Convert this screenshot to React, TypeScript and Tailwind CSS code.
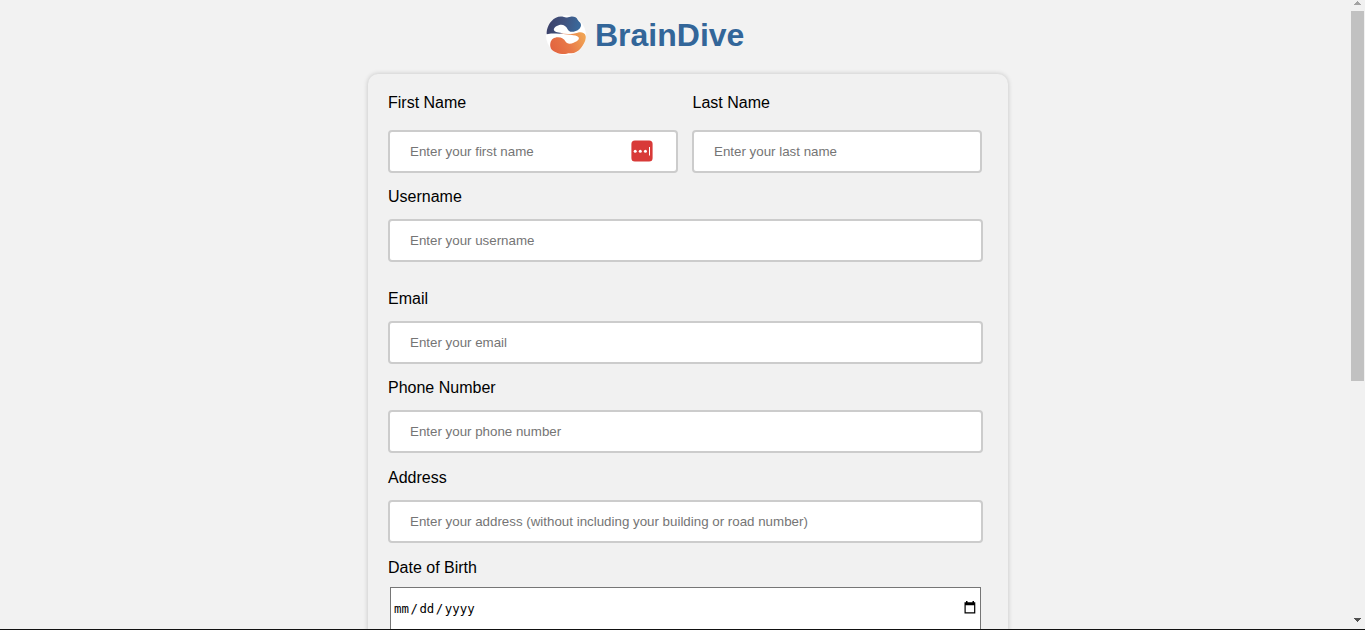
import React from 'react';

function Logo() {
  return (
    <svg className="h-[42px] w-[43px] shrink-0" viewBox="30 27 129 126" aria-hidden="true">
      <defs>
        <linearGradient id="navy" x1="0" y1="0.4" x2="1" y2="0.5">
          <stop offset="0" stopColor="#3b4068" />
          <stop offset="0.5" stopColor="#41537f" />
          <stop offset="1" stopColor="#386b9e" />
        </linearGradient>
        <linearGradient id="flame" x1="0" y1="0.7" x2="1" y2="0.4">
          <stop offset="0" stopColor="#e2633f" />
          <stop offset="0.5" stopColor="#e87848" />
          <stop offset="1" stopColor="#f0a354" />
        </linearGradient>
      </defs>
      <circle cx="93" cy="91" r="60" fill="#fff" />
      <path
        d="M35 88C34 74 40 58 50 48C60 36 74 32 87 36C94 39 99 36 106 35C115 33 125 36 128 44C130 49 138 51 138 60C138 70 128 78 116 80C106 82 100 78 97 71C94 63 83 57 73 60C62 63 55 69 57 76C60 82 72 83 85 85C68 88 50 82 35 88Z"
        fill="url(#navy)"
      />
      <path
        d="M74 84C95 89 114 87 128 83C140 80 150 84 152 93C154 105 146 119 138 129C130 139 118 146 107 145C98 144 93 148 81 147C71 147 66 143 59 140C49 136 44 127 46 115C48 103 57 97 69 97C80 97 88 102 91 109C95 117 106 118 116 113C128 109 135 101 130 96C124 88 94 91 74 84Z"
        fill="url(#flame)"
      />
    </svg>
  );
}

function PasswordBadge() {
  return (
    <svg className="absolute left-[243px] top-[10px] h-[22px] w-[22px]" viewBox="0 0 22 22" aria-hidden="true">
      <rect x="0.4" y="0.4" width="21.2" height="21.2" rx="3.5" fill="#d83a38" />
      <circle cx="4.2" cy="11.2" r="1.5" fill="#fff" />
      <circle cx="9.3" cy="11.2" r="1.5" fill="#fff" />
      <circle cx="14.4" cy="11.2" r="1.5" fill="#fff" />
      <rect x="18" y="7" width="1" height="8.5" fill="#fff" />
    </svg>
  );
}

const inputClass =
  'block h-[43px] w-full rounded-[4px] border-2 border-[#ccc] bg-white px-5 text-[13.333px] text-black outline-none placeholder:text-[#757575]';

type FieldProps = { id: string; label: string; placeholder: string; className?: string };

function Field({ id, label, placeholder, className = '' }: FieldProps) {
  return (
    <div className={className}>
      <label htmlFor={id} className="block h-[32px] leading-5">
        {label}
      </label>
      <input id={id} className={inputClass} placeholder={placeholder} />
    </div>
  );
}

function Scrollbar() {
  return (
    <div className="flex w-[15px] shrink-0 flex-col bg-[#f1f1f1] pl-px pr-px">
      <svg className="h-[11px] w-[13px]" viewBox="0 0 13 11" shapeRendering="crispEdges" aria-hidden="true">
        <path d="M6 1h1v1h1v1h1v1h1v1H3V4h1V3h1V2h1z" fill="#a3a3a3" />
      </svg>
      <div className="h-[370px] bg-[#c1c1c1]" />
      <svg className="mt-auto h-[11px] w-[13px]" viewBox="0 0 13 11" shapeRendering="crispEdges" aria-hidden="true">
        <path d="M3 0h7v1H9v1H8v1H7v1H6V3H5V2H4V1H3z" fill="#505050" />
      </svg>
    </div>
  );
}

export default function App() {
  return (
    <div className="flex h-[630px] w-[1365px] flex-col overflow-hidden bg-[#f2f2f2] font-['Liberation_Sans',Arial,sans-serif] text-[16px] text-black">
      <div className="flex min-h-0 flex-1">
        <main className="min-w-0 flex-1 overflow-hidden">
          <header className="flex h-[74px] items-start pl-[545px] pt-[14px]">
            <Logo />
            <h1 className="ml-[7px] mt-[3px] text-[32px] font-bold leading-[37px] text-[#336699]">BrainDive</h1>
          </header>
          <form className="ml-[368px] h-[900px] w-[640px] rounded-[10px] bg-[#f1f1f1] pl-5 pr-[25px] pt-[19px] shadow-[0_0_5px_rgba(0,0,0,0.2)]">
            <div className="flex gap-[14px]">
              <div className="w-[290px]">
                <label htmlFor="first" className="block h-[37px] leading-5">First Name</label>
                <div className="relative">
                  <input id="first" className={inputClass} placeholder="Enter your first name" />
                  <PasswordBadge />
                </div>
              </div>
              <div className="w-[290px]">
                <label htmlFor="last" className="block h-[37px] pl-[0.5px] leading-5">Last Name</label>
                <input id="last" className={inputClass} placeholder="Enter your last name" />
              </div>
            </div>
            <Field id="username" label="Username" placeholder="Enter your username" className="mt-[14px]" />
            <Field id="email" label="Email" placeholder="Enter your email" className="mt-[27px]" />
            <Field id="phone" label="Phone Number" placeholder="Enter your phone number" className="mt-[14px]" />
            <Field
              id="address"
              label="Address"
              placeholder="Enter your address (without including your building or road number)"
              className="mt-[15px]"
            />
            <div className="mt-[15px]">
              <div className="h-[29px] leading-5">Date of Birth</div>
              <div className="ml-[2px] flex h-[60px] w-[591px] items-start justify-between border border-[#767676] bg-white pl-[3px] pr-[4px] pt-[13px]">
                <div className="flex font-['DejaVu_Sans_Mono',monospace] text-[12.4px] leading-4">
                  <span>mm</span>
                  <span className="px-[1.5px]">/</span>
                  <span>dd</span>
                  <span className="px-[1.5px]">/</span>
                  <span>yyyy</span>
                </div>
                <svg className="h-[13px] w-[12px]" viewBox="0 0 12 13" aria-hidden="true">
                  <path d="M2 0h1.5v1.2h5V0H10v1.2h1.3v11.3H.5V1.2H2z M1.7 4.3v7h8.4v-7z" fill="#000" fillRule="evenodd" />
                </svg>
              </div>
            </div>
          </form>
        </main>
        <Scrollbar />
      </div>
      <div className="h-px shrink-0 bg-[#111]" />
    </div>
  );
}
